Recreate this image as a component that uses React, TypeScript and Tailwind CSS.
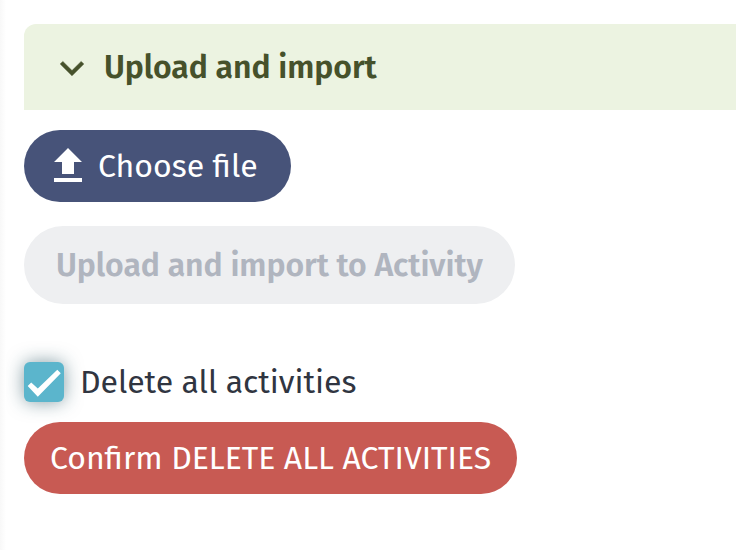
export default function App() {
  return (
    <main className="relative flex h-[550px] w-full flex-col items-start overflow-hidden bg-white pl-6 pt-6 font-['Fira_Sans','Noto_Sans',sans-serif] text-[32px] leading-none text-[#303541]">
      <div className="absolute inset-y-0 left-0 w-1.5 bg-linear-to-r from-[#f8f8f8] to-white" />
      <header className="flex h-[86px] w-full items-center gap-2 rounded-tl-xl bg-[#ecf3e1] pl-6 font-semibold text-[#46512b]">
        <svg className="mt-0.5 size-12 shrink-0" viewBox="0 0 24 24" fill="currentColor" stroke="currentColor" strokeWidth="0.25">
          <path d="M16.59 8.69 12 13.27 7.41 8.69 6.1 10l5.9 5.9 5.9-5.9z" />
        </svg>
        <h2 className="whitespace-nowrap tracking-[-0.08px]">Upload and import</h2>
      </header>
      <button className="mt-5 flex h-[72px] w-[267px] items-center gap-1.5 rounded-full bg-[#475379] pl-5 text-white">
        <svg className="size-12 shrink-0" viewBox="0 0 24 24" fill="currentColor">
          <path d="M5 20h14v-2H5zm0-10h4v6h6v-6h4l-7-7z" />
        </svg>
        <span className="whitespace-nowrap">Choose file</span>
      </button>
      <button className="mt-6 flex h-[78px] w-[491px] items-center rounded-full bg-[#eeeff1] pl-8 font-semibold text-[#b0b5bf]">
        <span className="whitespace-nowrap tracking-[-0.07px]">Upload and import to Activity</span>
      </button>
      <label className="mt-[58px] flex h-10 items-center gap-4">
        <span className="size-10 rounded-md bg-[#5bb5cc] shadow-[0_0_18px_rgba(30,75,90,0.55)]">
          <svg className="size-10" viewBox="0 0 40 40" fill="white">
            <path d="M3.7 24 7.2 20.5 13.8 26.6 33.3 7.8 36.8 11.2 13.8 34.8z" />
          </svg>
        </span>
        <span className="whitespace-nowrap tracking-[-0.03px]">Delete all activities</span>
      </label>
      <button className="mt-5 flex h-[72px] w-[493px] items-center rounded-full bg-[#c85a53] pl-[26px] pt-0.5 text-[31.95px] text-white">
        <span className="whitespace-nowrap">Confirm DELETE ALL ACTIVITIES</span>
      </button>
    </main>
  );
}
